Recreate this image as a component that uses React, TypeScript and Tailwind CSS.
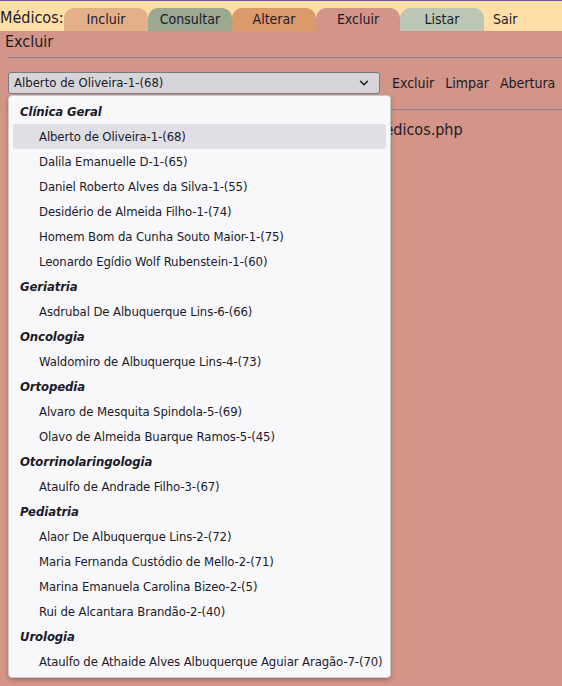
import { ChevronDown } from 'lucide-react';

const grupos: { nome: string; medicos: string[] }[] = [
  {
    nome: 'Clínica Geral',
    medicos: [
      'Alberto de Oliveira-1-(68)',
      'Dalila Emanuelle D-1-(65)',
      'Daniel Roberto Alves da Silva-1-(55)',
      'Desidério de Almeida Filho-1-(74)',
      'Homem Bom da Cunha Souto Maior-1-(75)',
      'Leonardo Egídio Wolf Rubenstein-1-(60)',
    ],
  },
  { nome: 'Geriatria', medicos: ['Asdrubal De Albuquerque Lins-6-(66)'] },
  { nome: 'Oncologia', medicos: ['Waldomiro de Albuquerque Lins-4-(73)'] },
  {
    nome: 'Ortopedia',
    medicos: ['Alvaro de Mesquita Spindola-5-(69)', 'Olavo de Almeida Buarque Ramos-5-(45)'],
  },
  { nome: 'Otorrinolaringologia', medicos: ['Ataulfo de Andrade Filho-3-(67)'] },
  {
    nome: 'Pediatria',
    medicos: [
      'Alaor De Albuquerque Lins-2-(72)',
      'Maria Fernanda Custódio de Mello-2-(71)',
      'Marina Emanuela Carolina Bizeo-2-(5)',
      'Rui de Alcantara Brandão-2-(40)',
    ],
  },
  { nome: 'Urologia', medicos: ['Ataulfo de Athaide Alves Albuquerque Aguiar Aragão-7-(70)'] },
];

const abas = [
  { label: 'Incluir', cor: 'bg-[#e4b08a]' },
  { label: 'Consultar', cor: 'bg-[#9ba991]' },
  { label: 'Alterar', cor: 'bg-[#dc9a6b]' },
  { label: 'Excluir', cor: 'bg-[#d39588]' },
  { label: 'Listar', cor: 'bg-[#bcc7b6]' },
];

const selecionado = 'Alberto de Oliveira-1-(68)';

export default function App() {
  return (
    <div className="relative min-h-screen bg-[#d29587] text-[#1b1a2a] font-['DejaVu_Sans_Condensed','DejaVu_Sans',sans-serif]">
      <div className="h-px bg-[#6a5a98]" />

      {/* barra de abas */}
      <div className="flex items-end bg-[#ffdfa8] pt-[7px]">
        <span className="w-16 pb-[3px] text-[16px] leading-5">Médicos:</span>
        {abas.map((aba) => (
          <div
            key={aba.label}
            className={`flex h-[23px] w-[84px] items-center justify-center rounded-t-[10px] text-[14px] ${aba.cor}`}
          >
            {aba.label}
          </div>
        ))}
        <div className="flex h-[23px] items-center pl-[9px] text-[14px]">Sair</div>
      </div>

      <div className="pl-[5px]">
        <h1 className="pt-[1px] text-[16px] leading-[20px]">Excluir</h1>
        <div className="ml-[2px] mt-[5px] border-t border-[#86889a]" />

        <div className="flex items-center pl-[3px] pt-[14px]">
          <div className="flex h-[22px] w-[372px] items-center justify-between rounded-[3px] border border-[#7a7a80] bg-[#d6d5da] pl-[5px] pr-[8px] text-[13px]">
            <span>{selecionado}</span>
            <ChevronDown className="h-3.5 w-3.5" strokeWidth={2.5} />
          </div>
          <div className="ml-[12px] flex gap-[11px] text-[14px]">
            <span>Excluir</span>
            <span>Limpar</span>
            <span>Abertura</span>
          </div>
        </div>

        <div className="ml-[2px] mt-[15px] border-t border-[#86889a]" />
        <p className="pl-[367px] pt-[8px] text-[16px]">Médicos.php</p>
      </div>

      {/* lista aberta do select */}
      <div className="absolute left-[8px] top-[95px] w-[383px] whitespace-nowrap rounded-[4px] border border-[#c9c9ce] bg-[#f8f8fa] px-[4px] py-[3px] text-[13px] tracking-[-0.1px] shadow-[0_2px_4px_rgba(0,0,0,0.25)]">
        {grupos.map((g) => (
          <div key={g.nome}>
            <div className="flex h-[25px] items-center pl-[7px] font-bold italic">{g.nome}</div>
            {g.medicos.map((m) => (
              <div
                key={m}
                className={`flex h-[25px] items-center rounded-[3px] pl-[26px] ${m === selecionado ? 'bg-[#dfdfe5]' : ''}`}
              >
                {m}
              </div>
            ))}
          </div>
        ))}
      </div>
    </div>
  );
}
